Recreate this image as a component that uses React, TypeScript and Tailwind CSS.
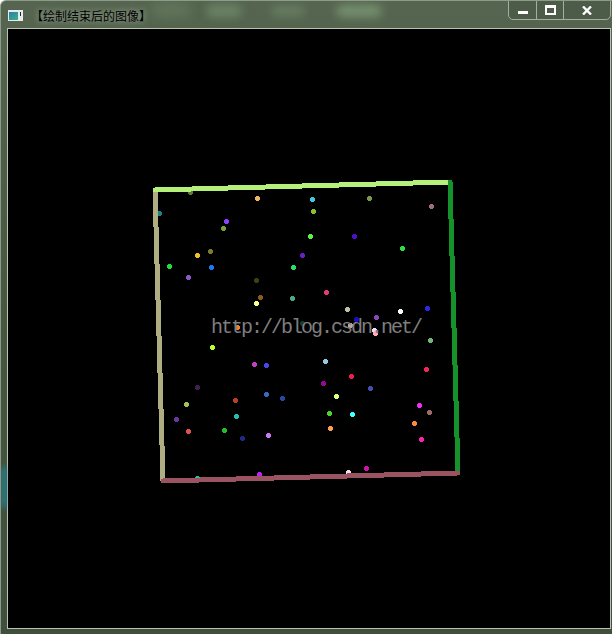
const dots: [number, number, string][] = [
  [190, 192, '#5f7a35'],
  [257, 198, '#f0b560'],
  [312, 199, '#40c8e0'],
  [369, 198, '#7a9a48'],
  [431, 206, '#a06a88'],
  [159, 213, '#1f7f8a'],
  [226, 221, '#8a40ff'],
  [313, 211, '#88c030'],
  [223, 228, '#7aa038'],
  [310, 236, '#60f048'],
  [354, 236, '#4a10c8'],
  [402, 248, '#28e040'],
  [210, 251, '#7a7a30'],
  [197, 255, '#f0c020'],
  [302, 255, '#6a20c0'],
  [169, 266, '#20e038'],
  [211, 267, '#1a78f0'],
  [293, 267, '#20e070'],
  [188, 277, '#8858c8'],
  [256, 280, '#3a4010'],
  [260, 297, '#8a5a20'],
  [326, 292, '#e03878'],
  [292, 298, '#48a888'],
  [256, 303, '#ffff80'],
  [347, 309, '#c0c0a8'],
  [400, 311, '#f0fff0'],
  [427, 308, '#2828f0'],
  [356, 319, '#1810c0'],
  [376, 317, '#8848b8'],
  [302, 323, '#104028'],
  [237, 327, '#f08030'],
  [350, 325, '#c0a0a8'],
  [374, 330, '#e8e0ff'],
  [375, 333, '#ffa8c0'],
  [430, 340, '#70b878'],
  [212, 347, '#b8ff20'],
  [254, 364, '#c040c0'],
  [266, 365, '#4848e8'],
  [325, 361, '#98c8e8'],
  [426, 369, '#f02858'],
  [351, 376, '#e82050'],
  [197, 387, '#402050'],
  [323, 383, '#980890'],
  [370, 388, '#4050a8'],
  [235, 400, '#b84020'],
  [186, 404, '#a0c058'],
  [266, 394, '#3868c0'],
  [282, 398, '#2848a0'],
  [336, 396, '#e0ff80'],
  [176, 419, '#6838a0'],
  [236, 416, '#20c0b0'],
  [329, 413, '#50d030'],
  [352, 414, '#40ffff'],
  [419, 405, '#f030f0'],
  [429, 412, '#a06868'],
  [188, 431, '#e05050'],
  [224, 430, '#20c020'],
  [242, 438, '#202888'],
  [268, 435, '#c878f0'],
  [330, 428, '#ffa050'],
  [414, 423, '#ff8840'],
  [421, 439, '#ff20b0'],
  [197, 478, '#20c0a8'],
  [259, 474, '#c020f0'],
  [348, 472, '#f0e0f0'],
  [366, 468, '#d010a8'],
]

// rect edges, drawn in the same order as the original (left, top, right, bottom)
const edges: [number, number, number, number, string][] = [
  [155, 190, 163, 481, '#afae82'],
  [155, 190, 450, 182, '#b5f07a'],
  [450, 182, 458, 473, '#15922a'],
  [163, 481, 458, 473, '#9a5360'],
]

function AppIcon() {
  return (
    <svg width="15" height="11" viewBox="0 0 15 11">
      <defs>
        <linearGradient id="ic" x1="0" y1="0" x2="1" y2="1">
          <stop offset="0" stopColor="#2b7fa8" />
          <stop offset="1" stopColor="#3fb08a" />
        </linearGradient>
      </defs>
      <rect x="0" y="0" width="15" height="11" fill="#e6ecec" />
      <rect x="1" y="2" width="9" height="8" fill="url(#ic)" />
      <rect x="12" y="2" width="1" height="4" fill="#1a2a3a" />
    </svg>
  )
}

function CanvasDrawing() {
  return (
    <svg width="602" height="599" viewBox="8 29 602 599" shapeRendering="crispEdges" className="block">
      {dots.map(([x, y, c], i) => (
        <g key={i} fill={c}>
          <rect x={x - 2} y={y - 1} width="5" height="3" />
          <rect x={x - 1} y={y - 2} width="3" height="5" />
        </g>
      ))}
      {edges.map(([x1, y1, x2, y2, c], i) => (
        <line key={i} x1={x1} y1={y1} x2={x2} y2={y2} stroke={c} strokeWidth="5" strokeLinecap="round" />
      ))}
    </svg>
  )
}

function CaptionButtons() {
  return (
    <div className="ml-auto mr-[1px] flex h-[20px] self-start -mt-[1px] rounded-b-[5px] border border-[#a3ae9f] bg-[#4d5c49]">
      <div className="flex w-[28px] items-center justify-center border-r border-[#a3ae9f]">
        <div className="mt-[5px] h-[3px] w-[10px] bg-white" />
      </div>
      <div className="flex w-[27px] items-center justify-center border-r border-[#a3ae9f]">
        <div className="h-[10px] w-[11px] border-2 border-t-[3px] border-white" />
      </div>
      <div className="flex w-[46px] items-center justify-center">
        <svg width="10" height="9" viewBox="0 0 10 9">
          <path d="M1 0.5 L9 8.5 M9 0.5 L1 8.5" stroke="#fff" strokeWidth="2.4" />
        </svg>
      </div>
    </div>
  )
}

export default function App() {
  return (
    <div className="relative w-[612px] h-[634px] overflow-hidden rounded-tl-[6px] border-l border-t border-[#8d9c8a] bg-gradient-to-b from-[#55654f] via-[#46563f] to-[#3f4f3c]">
      {/* aero glass blur blobs behind the caption */}
      <div className="absolute left-[205px] top-[4px] h-[12px] w-[36px] rounded-full bg-[#7d9a78] blur-[5px] opacity-60" />
      <div className="absolute left-[270px] top-[5px] h-[10px] w-[34px] rounded-full bg-[#7d9a78] blur-[5px] opacity-50" />
      <div className="absolute left-[335px] top-[4px] h-[12px] w-[46px] rounded-full bg-[#8eb088] blur-[5px] opacity-60" />
      <div className="absolute left-[150px] top-[2px] h-[14px] w-[40px] rounded-full bg-[#6f8a6a] blur-[6px] opacity-50" />
      <div className="absolute left-0 top-[466px] h-[40px] w-[6px] bg-[#1e8fa8] blur-[3px] opacity-80" />

      <div className="relative flex h-[27px] items-center gap-[8px] pl-[7px]">
        <div className="mt-[1px]">
          <AppIcon />
        </div>
        <span className="mt-[2px] text-[12px] leading-[14px] text-black [font-family:'Noto_Sans_CJK_SC','Noto_Sans',sans-serif] [text-shadow:0_0_6px_rgba(220,230,215,0.7)]">
          【绘制结束后的图像】
        </span>
        <CaptionButtons />
      </div>

      <div className="ml-[6px] w-fit border border-[#b8c3b5]">
        <div className="relative bg-black">
          <CanvasDrawing />
          <span className="absolute left-[203px] top-[289px] whitespace-nowrap text-[20px] leading-[20px] tracking-[-2px] text-[#7e7e7e] [font-family:'Liberation_Mono',monospace]">
            http://blog.csdn.net/
          </span>
        </div>
      </div>
    </div>
  )
}
